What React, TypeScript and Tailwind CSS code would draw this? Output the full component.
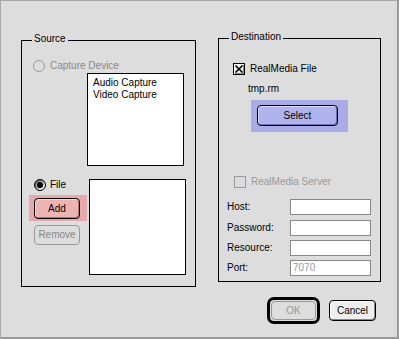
const font = { fontFamily: '"Liberation Sans", Arial, sans-serif' };

const Radio = ({ checked, disabled }: { checked?: boolean; disabled?: boolean }) => (
  <span
    className={`flex h-[12px] w-[12px] shrink-0 items-center justify-center rounded-full border ${
      disabled ? "border-[#999]" : "border-black bg-[#aaa] shadow-[inset_1px_1px_0_#666,inset_-1px_-1px_0_#fff]"
    }`}
  >
    {checked && <span className="h-[6px] w-[6px] rounded-full bg-black" />}
  </span>
);

const Check = ({ checked, disabled }: { checked?: boolean; disabled?: boolean }) => (
  <span
    className={`flex h-[12px] w-[12px] shrink-0 items-center justify-center border ${
      disabled ? "border-[#999]" : "border-black bg-[#eee] shadow-[inset_1px_1px_0_#fff,inset_-1px_-1px_0_#888]"
    }`}
  >
    {checked && (
      <svg width="10" height="10" viewBox="0 0 10 10">
        <path d="M1.5 1.5 L8.5 8.5 M8.5 1.5 L1.5 8.5" stroke="black" strokeWidth="1.6" />
      </svg>
    )}
  </span>
);

const Field = ({ label, value, className }: { label: string; value?: string; className: string }) => (
  <div className={`flex items-center ${className}`}>
    <span className="w-[71px] pl-[8px]">{label}</span>
    <div className="flex h-[16px] w-[81px] items-center border border-[#888] bg-white pl-[2px] text-[#999]">
      {value}
    </div>
  </div>
);

export default function App() {
  return (
    <div
      className="h-[339px] w-[399px] border-l border-t border-b-2 border-r-2 border-l-[#a8a8a8] border-t-[#a8a8a8] border-b-[#999] border-r-[#999] bg-[#dddddd] text-[10px] leading-[12px] text-black"
      style={font}
    >
      <div className="flex items-start pl-[20px]">
        {/* Source */}
        <div className="relative mt-[39px] h-[247px] w-[175px] border border-black">
          <span className="absolute left-[10px] top-[-8px] bg-[#dddddd] px-[2px]">Source</span>
          <div className="mt-[19px] flex items-center gap-[5px] pl-[11px] text-[#888]">
            <Radio disabled />
            <span>Capture Device</span>
          </div>
          <div className="ml-[65px] mt-[1px] h-[93px] w-[97px] border border-black bg-white pl-[5px] pt-[3px]">
            <div>Audio Capture</div>
            <div>Video Capture</div>
          </div>
          <div className="mt-[13px] flex items-start">
            <div className="ml-[7px] flex w-[58px] flex-col">
              <div className="flex items-center gap-[4px] pl-[5px]">
                <Radio checked />
                <span>File</span>
              </div>
              <div className="mt-[4px] h-[26px] w-[58px] bg-[#e6aaac] pl-[5px] pt-[3px]">
                <button className="flex h-[21px] w-[46px] items-center justify-center rounded-[4px] border border-black bg-[#eeb4b4] shadow-[inset_1px_1px_0_#f8d4d4,inset_-1px_-1px_0_#b07878]">
                  Add
                </button>
              </div>
              <button className="ml-[5px] mt-[4px] flex h-[20px] w-[46px] items-center justify-center rounded-[4px] border border-[#999] text-[#888]">
                Remove
              </button>
            </div>
            <div className="ml-[2px] h-[96px] w-[97px] border border-black bg-white" />
          </div>
        </div>

        {/* Destination */}
        <div className="relative ml-[22px] mt-[37px] h-[244px] w-[163px] border border-black">
          <span className="absolute left-[10px] top-[-8px] bg-[#dddddd] px-[2px]">Destination</span>
          <div className="mt-[24px] flex items-center gap-[5px] pl-[14px]">
            <Check checked />
            <span>RealMedia File</span>
          </div>
          <div className="mt-[8px] pl-[29px]">tmp.rm</div>
          <div className="ml-[32px] mt-[5px] h-[32px] w-[97px] bg-[#a9ace8] pl-[6px] pt-[5px]">
            <button className="flex h-[21px] w-[81px] items-center justify-center rounded-[4px] border border-black bg-[#b0b4ee] shadow-[inset_1px_1px_0_#d8daf8,inset_-1px_-1px_0_#6c70b0]">
              Select
            </button>
          </div>
          <div className="mt-[44px] flex items-center gap-[5px] pl-[15px] text-[#999]">
            <Check disabled />
            <span>RealMedia Server</span>
          </div>
          <Field label="Host:" className="mt-[11px]" />
          <Field label="Password:" className="mt-[5px]" />
          <Field label="Resource:" className="mt-[4px]" />
          <Field label="Port:" value="7070" className="mt-[4px]" />
        </div>
      </div>

      {/* Buttons */}
      <div className="mt-[10px] flex items-center justify-end gap-[9px] pr-[21px]">
        <div className="flex h-[27px] w-[53px] items-center justify-center rounded-[7px] border-[3px] border-black">
          <button className="flex h-[19px] w-[45px] items-center justify-center rounded-[4px] border border-[#999] text-[#999]">
            OK
          </button>
        </div>
        <button className="flex h-[21px] w-[47px] items-center justify-center rounded-[4px] border border-black bg-[#eee] shadow-[inset_1px_1px_0_#fff,inset_-1px_-1px_0_#888]">
          Cancel
        </button>
      </div>
    </div>
  );
}
